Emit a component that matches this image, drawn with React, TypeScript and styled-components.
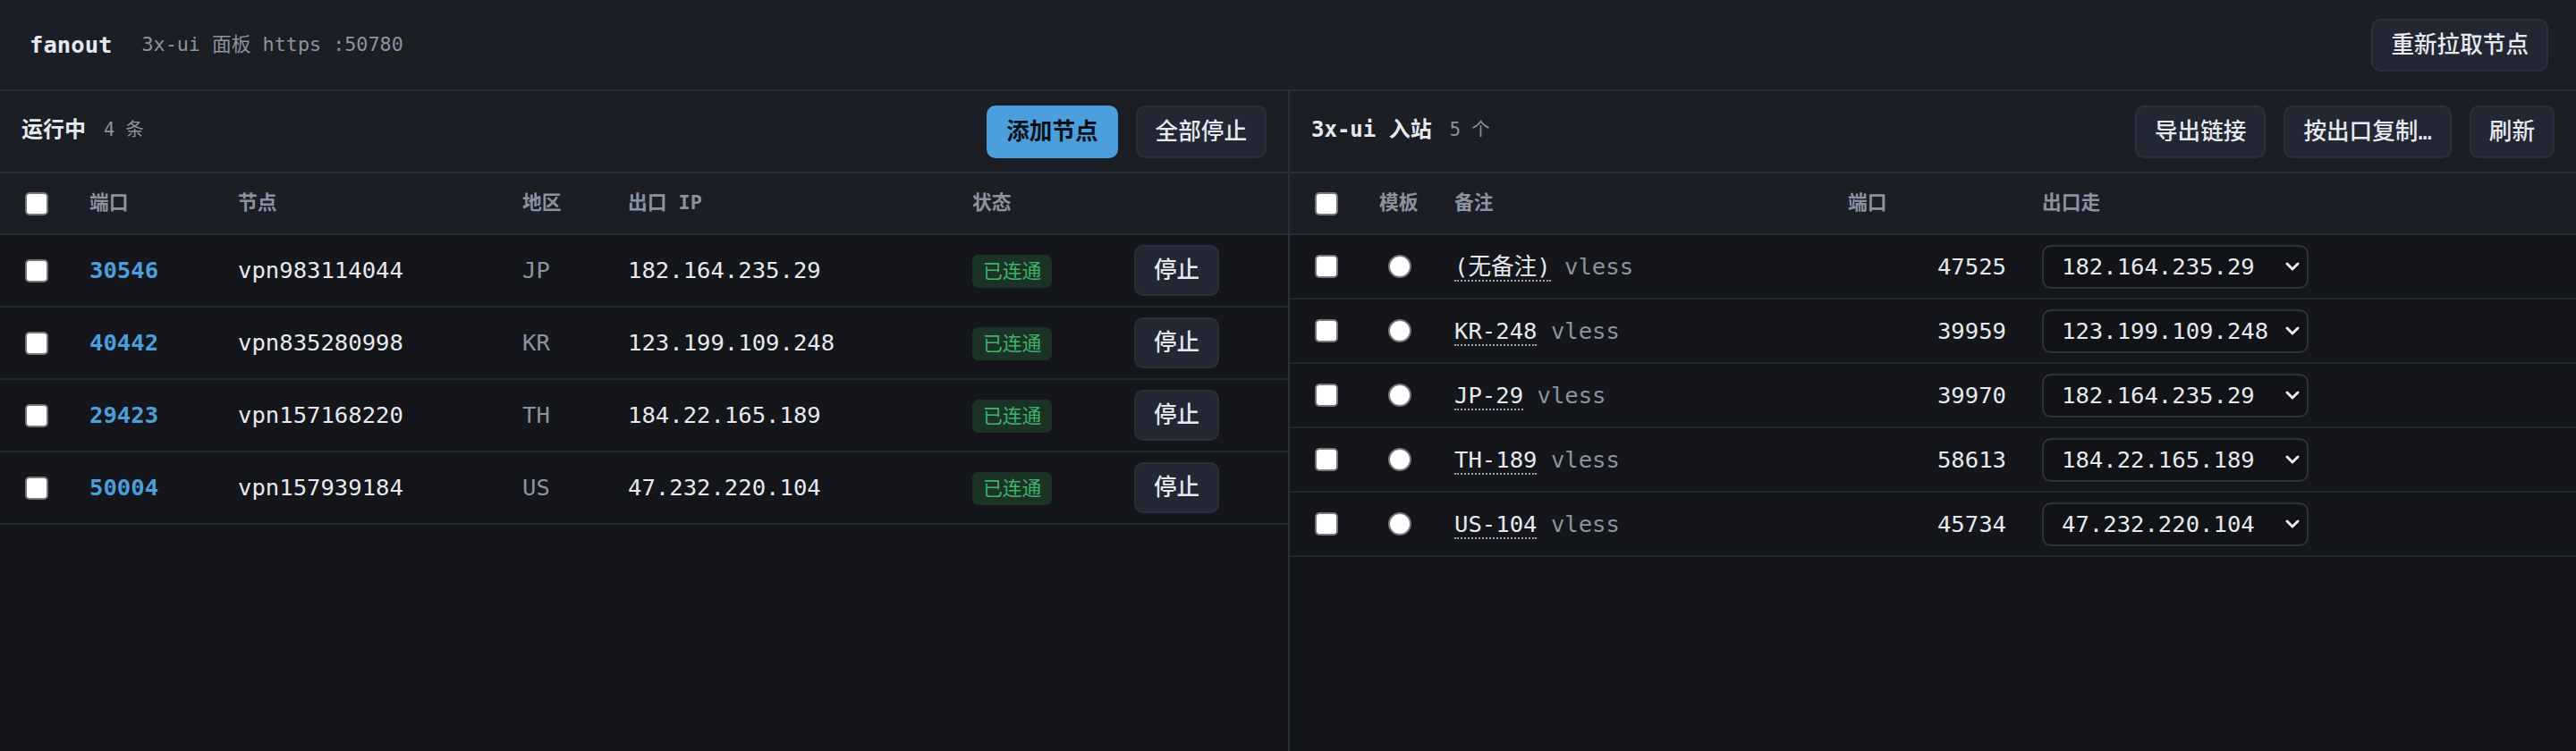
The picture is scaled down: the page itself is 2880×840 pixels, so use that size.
import React from "react";
import styled, { createGlobalStyle, css } from "styled-components";

const GlobalStyle = createGlobalStyle`
  html, body {
    margin: 0;
    padding: 0;
    background: #13151a;
  }
  body {
    font-family: "DejaVu Sans Mono", "Noto Sans CJK SC", monospace;
    font-size: 25.6px;
    line-height: 1.5;
    color: #e6e9ef;
  }
  * {
    box-sizing: border-box;
  }
`;

const FONT = `"DejaVu Sans Mono", "Noto Sans CJK SC", monospace`;

type Node = {
  port: number;
  name: string;
  region: string;
  ip: string;
};

type Inbound = {
  remark: string;
  proto: string;
  port: number;
  out: string;
};

const nodes: Node[] = [
  { port: 30546, name: "vpn983114044", region: "JP", ip: "182.164.235.29" },
  { port: 40442, name: "vpn835280998", region: "KR", ip: "123.199.109.248" },
  { port: 29423, name: "vpn157168220", region: "TH", ip: "184.22.165.189" },
  { port: 50004, name: "vpn157939184", region: "US", ip: "47.232.220.104" },
];

const inbounds: Inbound[] = [
  { remark: "(无备注)", proto: "vless", port: 47525, out: "182.164.235.29" },
  { remark: "KR-248", proto: "vless", port: 39959, out: "123.199.109.248" },
  { remark: "JP-29", proto: "vless", port: 39970, out: "182.164.235.29" },
  { remark: "TH-189", proto: "vless", port: 58613, out: "184.22.165.189" },
  { remark: "US-104", proto: "vless", port: 45734, out: "47.232.220.104" },
];

const exits = nodes.map((n) => n.ip);

function App() {
  return (
    <Page>
      <GlobalStyle />
      <TopBar>
        <Brand>fanout</Brand>
        <Meta>3x-ui 面板 https :50780</Meta>
        <Spacer />
        <Button>重新拉取节点</Button>
      </TopBar>

      <Panels>
        <Panel $divider>
          <Toolbar>
            <Title>运行中</Title>
            <Count>4 条</Count>
            <Spacer />
            <Button $primary>添加节点</Button>
            <Button>全部停止</Button>
          </Toolbar>
          <HeadRow $cols={leftCols}>
            <CheckCell>
              <Check />
            </CheckCell>
            <Th>端口</Th>
            <Th>节点</Th>
            <Th>地区</Th>
            <Th>出口 IP</Th>
            <Th>状态</Th>
            <Th />
          </HeadRow>
          {nodes.map((n) => (
            <Row key={n.port} $cols={leftCols} $height={79}>
              <CheckCell>
                <Check />
              </CheckCell>
              <Cell>
                <Port>{n.port}</Port>
              </Cell>
              <Cell>{n.name}</Cell>
              <Cell $muted>{n.region}</Cell>
              <Cell>{n.ip}</Cell>
              <Cell>
                <Badge>已连通</Badge>
              </Cell>
              <Cell>
                <Button $small>停止</Button>
              </Cell>
            </Row>
          ))}
        </Panel>

        <Panel>
          <Toolbar>
            <Title>3x-ui 入站</Title>
            <Count>5 个</Count>
            <Spacer />
            <Button>导出链接</Button>
            <Button>按出口复制…</Button>
            <Button>刷新</Button>
          </Toolbar>
          <HeadRow $cols={rightCols}>
            <CheckCell>
              <Check />
            </CheckCell>
            <Th>模板</Th>
            <Th>备注</Th>
            <Th>端口</Th>
            <Th>出口走</Th>
          </HeadRow>
          {inbounds.map((ib) => (
            <Row key={ib.port} $cols={rightCols} $height={70}>
              <CheckCell>
                <Check />
              </CheckCell>
              <RadioCell>
                <Radio name="template" />
              </RadioCell>
              <Cell>
                <Remark>{ib.remark}</Remark> <Proto>{ib.proto}</Proto>
              </Cell>
              <Cell $right>{ib.port}</Cell>
              <Cell>
                <SelectWrap>
                  <Select defaultValue={ib.out}>
                    {exits.map((ip) => (
                      <option key={ip} value={ip}>
                        {ip}
                      </option>
                    ))}
                  </Select>
                  <Chevron viewBox="0 0 16 10" aria-hidden>
                    <polyline points="2,2 8,8 14,2" />
                  </Chevron>
                </SelectWrap>
              </Cell>
            </Row>
          ))}
        </Panel>
      </Panels>
    </Page>
  );
}

const leftCols = "80px 166px 318px 118px 385px 181px 1fr";
const rightCols = "80px 84px 440px 217px 1fr";

const Page = styled.div`
  min-height: 100vh;
  display: flex;
  flex-direction: column;
  background: #13151a;
`;

const TopBar = styled.header`
  display: flex;
  align-items: center;
  height: 102px;
  padding: 0 31px 0 33px;
  background: #1b1e25;
  border-bottom: 2px solid #2a2e37;
`;

const Brand = styled.div`
  font-weight: 700;
  font-size: 25.6px;
  color: #e6e9ef;
`;

const Meta = styled.div`
  margin-left: 33px;
  font-size: 21.76px;
  color: #8b93a1;
`;

const Spacer = styled.div`
  flex: 1;
`;

const Panels = styled.div`
  flex: 1;
  display: grid;
  grid-template-columns: 1442px 1fr;
`;

const Panel = styled.section<{ $divider?: boolean }>`
  display: flex;
  flex-direction: column;
  min-width: 0;
  ${(p) =>
    p.$divider &&
    css`
      border-right: 2px solid #2a2e37;
    `}
`;

const Toolbar = styled.div`
  display: flex;
  align-items: center;
  gap: 20px;
  height: 92px;
  padding: 0 24px;
  background: #1b1e25;
  border-bottom: 2px solid #2a2e37;
`;

const Title = styled.div`
  font-size: 24px;
  font-weight: 700;
  color: #e6e9ef;
  margin-bottom: 4px;
`;

const Count = styled.div`
  font-size: 20.4px;
  color: #8b93a1;
  margin-bottom: 4px;
`;

const Button = styled.button<{ $primary?: boolean; $small?: boolean }>`
  font-family: ${FONT};
  font-size: 25.6px;
  font-weight: 500;
  line-height: 1.5;
  height: ${(p) => (p.$small ? 57 : 59)}px;
  padding: 0 20px;
  border-radius: 10px;
  border: 2px solid #2a2f3a;
  background: #222733;
  color: #e6e9ef;
  white-space: nowrap;
  cursor: pointer;
  ${(p) =>
    p.$primary &&
    css`
      background: #4a9fdc;
      border-color: #4a9fdc;
      color: #0d1117;
      font-weight: 700;
    `}
`;

const HeadRow = styled.div<{ $cols: string }>`
  display: grid;
  grid-template-columns: ${(p) => p.$cols};
  align-items: center;
  height: 69px;
  background: #1b1e25;
  border-bottom: 2px solid #2a2e37;
`;

const Row = styled.div<{ $cols: string; $height: number }>`
  display: grid;
  grid-template-columns: ${(p) => p.$cols};
  align-items: center;
  min-height: ${(p) => p.$height + 2}px;
  background: #14161b;
  border-bottom: 2px solid #23272f;
`;

const Th = styled.div`
  padding: 0 20px;
  font-size: 21.76px;
  font-weight: 700;
  color: #8b93a1;
  white-space: nowrap;
`;

const Cell = styled.div<{ $muted?: boolean; $right?: boolean }>`
  padding: 0 20px;
  white-space: nowrap;
  color: ${(p) => (p.$muted ? "#8b93a1" : "#e6e9ef")};
  text-align: ${(p) => (p.$right ? "right" : "left")};
`;

const CheckCell = styled.div`
  display: flex;
  align-items: center;
  padding-left: 28px;
`;

const RadioCell = styled.div`
  display: flex;
  align-items: center;
  padding-left: 30px;
`;

const Check = styled.input.attrs({ type: "checkbox" })`
  appearance: none;
  width: 26px;
  height: 26px;
  margin: 0;
  background: #ffffff;
  border: 2px solid #767676;
  border-radius: 5px;
`;

const Radio = styled.input.attrs({ type: "radio" })`
  appearance: none;
  width: 26px;
  height: 26px;
  margin: 0;
  background: #ffffff;
  border: 2px solid #767676;
  border-radius: 50%;
`;

const Port = styled.span`
  color: #4a9fdc;
  font-weight: 700;
`;

const Badge = styled.span`
  display: inline-block;
  padding: 4px 12px;
  font-size: 21.76px;
  line-height: 29px;
  color: #3fb16b;
  background: #1b3324;
  border-radius: 7px;
`;

const Remark = styled.span`
  color: #e6e9ef;
  border-bottom: 2px dotted #9aa3b1;
`;

const Proto = styled.span`
  color: #8b93a1;
`;

const SelectWrap = styled.div`
  position: relative;
  display: inline-block;
  vertical-align: middle;
`;

const Select = styled.select`
  appearance: none;
  display: block;
  width: 298px;
  height: 49px;
  padding: 0 40px 0 20px;
  font-family: ${FONT};
  font-size: 25.6px;
  color: #e6e9ef;
  background: #111318;
  border: 2px solid #2c313b;
  border-radius: 10px;
  outline: none;
`;

const Chevron = styled.svg`
  position: absolute;
  right: 10px;
  top: 50%;
  width: 16px;
  height: 10px;
  margin-top: -5px;
  pointer-events: none;
  fill: none;
  stroke: #e6e9ef;
  stroke-width: 3;
  stroke-linecap: round;
  stroke-linejoin: round;
`;

export default App;
